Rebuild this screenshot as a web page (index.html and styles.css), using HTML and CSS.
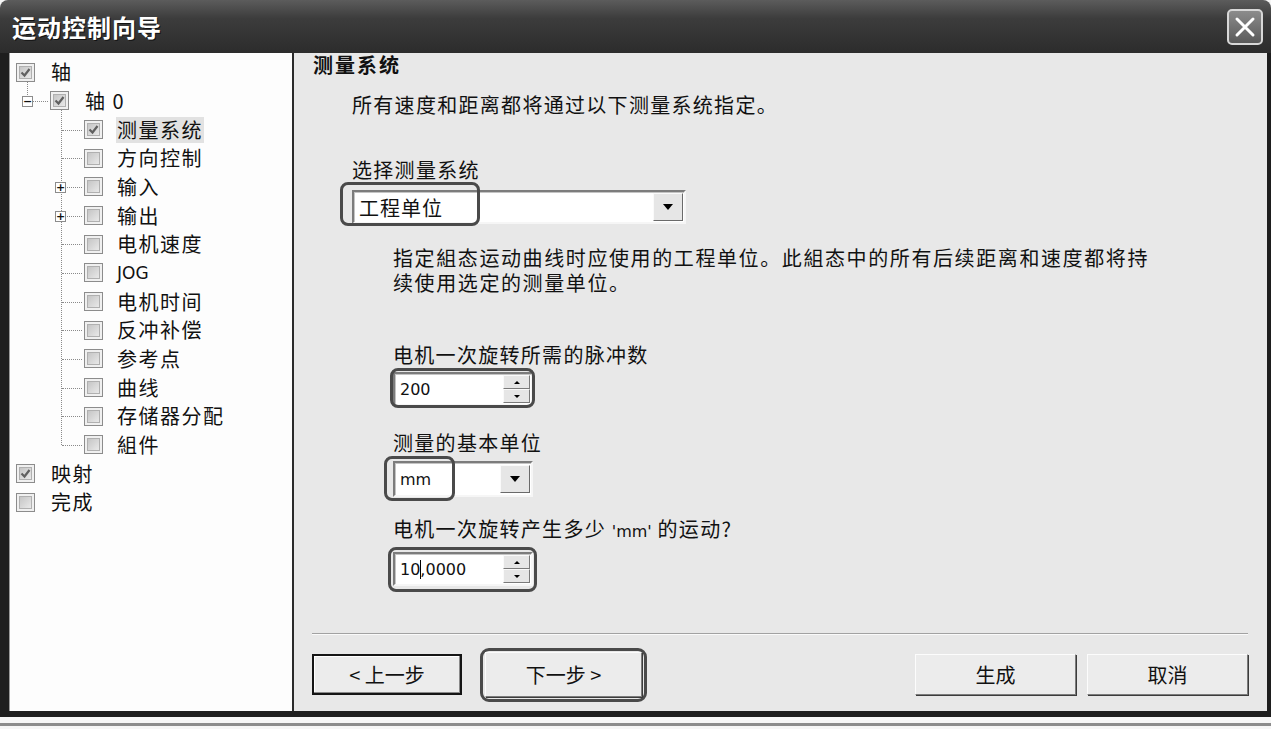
FILE: index.html
```html
<!DOCTYPE html>
<html lang="zh-CN">
<head>
  <meta charset="UTF-8">
  <title>运动控制向导</title>
  <link rel="stylesheet" href="styles.css">
</head>
<body>
  <div class="window">
    <div class="titlebar">
      <span class="title">运动控制向导</span>
      <button class="close" aria-label="关闭">
        <svg width="22" height="22" viewBox="0 0 22 22"><path d="M3 3 L19 19 M19 3 L3 19" stroke="#fff" stroke-width="3" stroke-linecap="round"/></svg>
      </button>
    </div>

    <div class="body">
      <!-- 左侧树 -->
      <div class="tree">
        <div class="node l0"><span class="cb on"></span><span class="lbl">轴</span></div>
        <div class="node l1">
          <span class="vline"></span>
          <span class="exp">−</span>
          <span class="cb on"></span><span class="lbl">轴 0</span>
        </div>
        <div class="children">
          <div class="node l2"><span class="cb on"></span><span class="lbl sel">测量系统</span></div>
          <div class="node l2"><span class="cb"></span><span class="lbl">方向控制</span></div>
          <div class="node l2"><span class="exp">+</span><span class="cb"></span><span class="lbl">输入</span></div>
          <div class="node l2"><span class="exp">+</span><span class="cb"></span><span class="lbl">输出</span></div>
          <div class="node l2"><span class="cb"></span><span class="lbl">电机速度</span></div>
          <div class="node l2"><span class="cb"></span><span class="lbl latin">JOG</span></div>
          <div class="node l2"><span class="cb"></span><span class="lbl">电机时间</span></div>
          <div class="node l2"><span class="cb"></span><span class="lbl">反冲补偿</span></div>
          <div class="node l2"><span class="cb"></span><span class="lbl">参考点</span></div>
          <div class="node l2"><span class="cb"></span><span class="lbl">曲线</span></div>
          <div class="node l2"><span class="cb"></span><span class="lbl">存储器分配</span></div>
          <div class="node l2"><span class="cb"></span><span class="lbl">組件</span></div>
        </div>
        <div class="node l0"><span class="cb on"></span><span class="lbl">映射</span></div>
        <div class="node l0"><span class="cb"></span><span class="lbl">完成</span></div>
      </div>

      <!-- 右侧内容 -->
      <div class="content">
        <div class="page">
          <h2>测量系统</h2>
          <p class="intro">所有速度和距离都将通过以下测量系统指定。</p>

          <div class="label first">选择测量系统</div>
          <div class="combo wide">
            <span class="val">工程单位</span>
            <span class="drop"><i class="tri"></i></span>
            <span class="ring r-sys"></span>
          </div>

          <div class="sub">
            <div class="note">
              <div class="note-line">指定組态运动曲线时应使用的工程单位。此組态中的所有后续距离和速度都将持</div>
              <div class="note-line">续使用选定的测量单位。</div>
            </div>

            <div class="label l-pulse">电机一次旋转所需的脉冲数</div>
            <div class="spin">
              <span class="val num">200</span>
              <span class="arrows"><span class="up"><i></i></span><span class="down"><i></i></span></span>
              <span class="ring r-spin"></span>
            </div>

            <div class="label l-unit">测量的基本单位</div>
            <div class="combo small">
              <span class="val num">mm</span>
              <span class="drop"><i class="tri"></i></span>
              <span class="ring r-unit"></span>
            </div>

            <div class="label l-move">电机一次旋转产生多少 <span class="num">'mm'</span> 的运动?</div>
            <div class="spin">
              <span class="val num">10<span class="caret"></span>,0000</span>
              <span class="arrows"><span class="up"><i></i></span><span class="down"><i></i></span></span>
              <span class="ring r-spin2"></span>
            </div>
          </div>
        </div>

        <div class="sep"></div>
        <div class="buttons">
          <button class="btn prev">&lt; 上一步</button>
          <span class="btn-ring"><button class="btn next">下一步 &gt;</button></span>
          <button class="btn gen">生成</button>
          <button class="btn cancel">取消</button>
        </div>
      </div>
    </div>
  </div>
  <div class="desk"><div class="line"></div></div>
</body>
</html>
```

FILE: styles.css
```css
body {
  margin: 0;
  background: #f6f6f6;
  font-family: "Liberation Sans", "Noto Sans CJK SC", sans-serif;
  color: #111;
  overflow: hidden;
}
.window {
  width: 1271px;
  height: 717px;
  display: flex;
  flex-direction: column;
}
.titlebar {
  height: 53px;
  flex: none;
  display: flex;
  align-items: center;
  justify-content: space-between;
  padding: 0 8px 0 12px;
  border-radius: 8px 8px 0 0;
  background: linear-gradient(#5c5c5c, #3c3c3c 35%, #2c2c2c);
}
.title {
  color: #fff;
  font-family: "Noto Sans CJK SC", sans-serif;
  font-size: 24px;
  font-weight: bold;
  letter-spacing: 1px;
  text-shadow: 1px 1px 0 #111;
}
.close {
  width: 36px;
  height: 36px;
  padding: 0;
  display: flex;
  align-items: center;
  justify-content: center;
  border: 2px solid #d8d8d8;
  border-radius: 5px;
  background: linear-gradient(#8c8c8c, #5a5a5a);
}
.body {
  flex: 1;
  display: flex;
  min-height: 0;
  border-style: solid;
  border-color: #1e1e1e;
  border-width: 0 4px 6px 9px;
}

/* 树 */
.tree {
  width: 285px;
  box-sizing: border-box;
  flex: none;
  background: #fdfdfd;
  border-left: 1px solid #9a9a9a;
  border-right: 2px solid #2a2a2a;
  padding-top: 5px;
}
.node {
  position: relative;
  height: 28.66px;
  display: flex;
  align-items: center;
  font-family: "Noto Sans CJK SC", sans-serif;
  font-size: 20px;
  letter-spacing: 1.5px;
}
.node.l0 { padding-left: 6px; }
.node.l1 { padding-left: 40px; }
.node.l2 { padding-left: 74px; }
.lbl {
  margin-left: 15px;
  line-height: 26px;
  padding: 0 1px;
}
.l2 .lbl { margin-left: 13px; }
.lbl.sel { background: #e2e2e2; }
.lbl.latin { font-family: "DejaVu Sans", sans-serif; font-size: 17px; letter-spacing: 0; }
.cb {
  width: 19px;
  height: 19px;
  box-sizing: border-box;
  flex: none;
  border: 1px solid #8c8c8c;
  background: linear-gradient(135deg, #bcbcbc, #f2f2f2);
  box-shadow: inset 0 0 0 2px #f0f0f0, inset 0 0 0 3px #b0b0b0;
}
.cb.on {
  background:
    url("data:image/svg+xml,%3Csvg xmlns='http://www.w3.org/2000/svg' width='17' height='17'%3E%3Cpath d='M4.5 8.5 L7.5 11.5 L12.5 5' fill='none' stroke='%23606060' stroke-width='2.2'/%3E%3C/svg%3E") center no-repeat,
    linear-gradient(135deg, #bcbcbc, #f2f2f2);
}
.exp {
  position: absolute;
  width: 11px;
  height: 11px;
  box-sizing: border-box;
  border: 1px solid #8c8c8c;
  background: #fff;
  font-family: "DejaVu Sans", sans-serif;
  font-size: 11px;
  font-weight: bold;
  line-height: 9px;
  text-align: center;
  letter-spacing: 0;
  top: 50%;
  margin-top: -5px;
  z-index: 1;
}
.l1 .exp { left: 12px; }
.l2 .exp { left: 45px; }
.l1::before, .l2::before {
  content: "";
  position: absolute;
  top: 50%;
  border-top: 1px dotted #8a8a8a;
}
.l1::before { left: 23px; width: 15px; }
.l2::before { left: 52px; width: 20px; }
.vline {
  position: absolute;
  left: 17px;
  top: -5px;
  height: 13px;
  border-left: 1px dotted #8a8a8a;
}
.children { position: relative; }
.children::before {
  content: "";
  position: absolute;
  left: 51px;
  top: -5px;
  bottom: 14px;
  border-left: 1px dotted #8a8a8a;
}

/* 内容 */
.content {
  flex: 1;
  display: flex;
  flex-direction: column;
  background: #e8e8e8;
  padding: 0 19px 16px 18px;
  font-family: "Noto Sans CJK SC", sans-serif;
  font-size: 20px;
  letter-spacing: 1.3px;
}
.page { flex: 1; }
.num {
  font-family: "DejaVu Sans", sans-serif;
  font-size: 16px;
  letter-spacing: 0;
}
h2 {
  margin: 0 0 0 1px;
  font-size: 20px;
  line-height: 24px;
  letter-spacing: 2px;
  font-weight: bold;
}
.intro {
  margin: 16px 0 0 40px;
  line-height: 24px;
}
.label { line-height: 24px; }
.label.first { margin: 41px 0 8px 40px; }
.sub { margin-left: 81px; }
.note {
  margin-top: 21px;
  letter-spacing: 1.6px;
}
.note-line {
  height: 25px;
  line-height: 25px;
}
.l-pulse { margin: 48px 0 5px; }
.l-unit { margin: 25px 0 6px; }
.l-move { margin: 20px 0 8px; }

.combo, .spin {
  position: relative;
  display: flex;
  align-items: center;
  box-sizing: border-box;
  background: #fff;
  border: 2px solid;
  border-color: #7c7c7c #f6f6f6 #f6f6f6 #7c7c7c;
  box-shadow: inset 1px 1px 0 #c4c4c4;
}
.combo.wide { width: 334px; height: 34px; margin-left: 40px; }
.combo.small { width: 140px; height: 36px; }
.spin { width: 140px; height: 34px; }
.val { padding-left: 5px; flex: 1; }
.combo.wide .val { letter-spacing: 1px; }
.drop {
  width: 30px;
  height: 28px;
  margin-right: 1px;
  box-sizing: border-box;
  display: flex;
  align-items: center;
  justify-content: center;
  background: #e6e6e6;
  border: 1px solid;
  border-color: #fafafa #6a6a6a #6a6a6a #fafafa;
}
.tri {
  width: 0;
  height: 0;
  border-left: 5px solid transparent;
  border-right: 5px solid transparent;
  border-top: 6px solid #000;
}
.arrows {
  width: 27px;
  height: 28px;
  margin-right: 1px;
  display: flex;
  flex-direction: column;
}
.arrows span {
  flex: 1;
  display: flex;
  align-items: center;
  justify-content: center;
  background: #e6e6e6;
  border: 1px solid;
  border-color: #fafafa #7a7a7a #7a7a7a #fafafa;
}
.arrows i {
  width: 0;
  height: 0;
  border-left: 3px solid transparent;
  border-right: 3px solid transparent;
}
.up i { border-bottom: 3px solid #000; }
.down i { border-top: 3px solid #000; }
.caret {
  display: inline-block;
  width: 1px;
  height: 19px;
  background: #000;
  vertical-align: -4px;
  margin-right: -1px;
}

/* 标注框 */
.ring {
  position: absolute;
  box-sizing: border-box;
  border: 3px solid #4a4a4a;
  border-radius: 8px;
  pointer-events: none;
}
.r-sys { left: -14px; top: -10px; width: 140px; height: 44px; }
.r-spin { left: -5px; top: -6px; width: 145px; height: 40px; }
.r-unit { left: -11px; top: -7px; width: 71px; height: 45px; }
.r-spin2 { left: -7px; top: -7px; width: 149px; height: 45px; }

/* 底部按钮 */
.sep {
  height: 0;
  border-top: 1px solid #a2a2a2;
  border-bottom: 1px solid #fafafa;
}
.buttons {
  margin-top: 19px;
  height: 41px;
  display: flex;
  align-items: center;
}
.btn {
  height: 41px;
  font-family: "Noto Sans CJK SC", sans-serif;
  font-size: 20px;
  color: #111;
  background: #ececec;
  border: 1px solid;
  border-color: #fcfcfc #7c7c7c #7c7c7c #fcfcfc;
  box-shadow: 1px 1px 0 #3c3c3c;
  padding: 0;
}
.btn.prev {
  width: 150px;
  border: 2px solid #151515;
  box-shadow: inset -1px -1px 0 #8a8a8a, inset 1px 1px 0 #fff;
}
.btn-ring {
  margin-left: 18px;
  padding: 1px 2px 2px 2px;
  border: 3px solid #4a4a4a;
  border-radius: 9px;
  display: flex;
}
.btn.next { width: 157px; height: 45px; }
.btn.gen { width: 161px; margin-left: auto; }
.btn.cancel { width: 161px; margin-left: 11px; }

.desk {
  height: 12px;
  padding-top: 6px;
  box-sizing: border-box;
}
.desk .line {
  height: 3px;
  background: #8c8c8c;
}
```
